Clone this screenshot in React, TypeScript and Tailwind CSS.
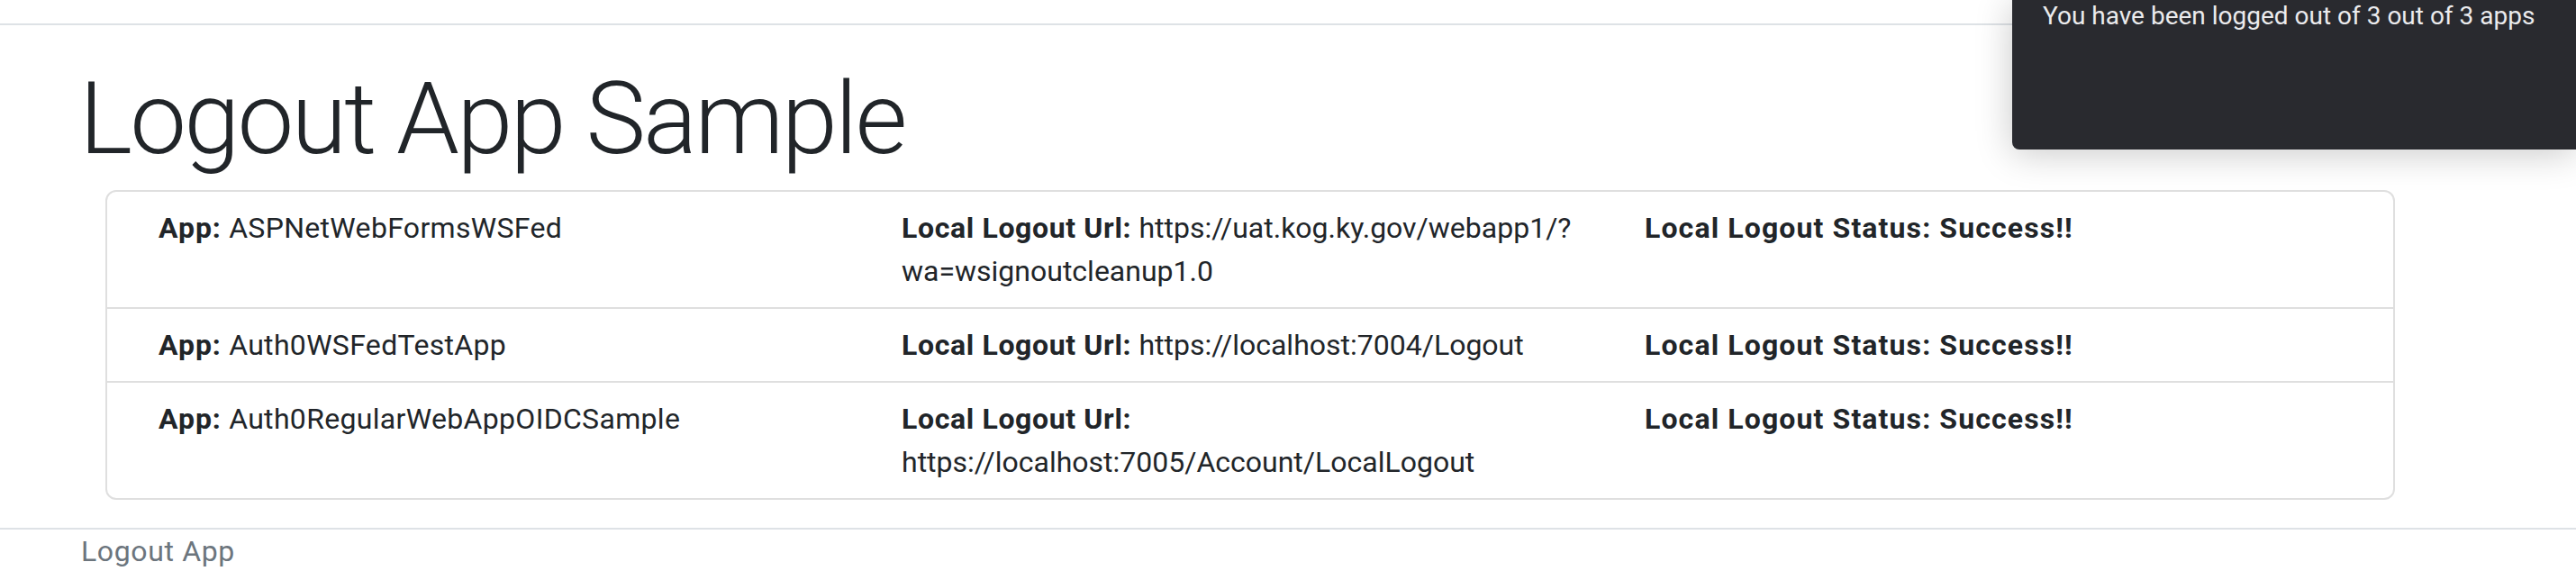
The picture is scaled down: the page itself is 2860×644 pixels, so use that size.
import { Fragment } from "react";

const apps = [
  { name: "ASPNetWebFormsWSFed", url: ["https://uat.kog.ky.gov/webapp1/?", "wa=wsignoutcleanup1.0"] },
  { name: "Auth0WSFedTestApp", url: ["https://localhost:7004/Logout"] },
  { name: "Auth0RegularWebAppOIDCSample", url: ["https://localhost:7005/Account/LocalLogout"] },
];

export default function App() {
  return (
    <div className="relative min-h-screen bg-white font-['Roboto',sans-serif] text-[#212529]">
      {/* Top bar */}
      <div className="h-[28px] border-b-2 border-[#dee2e6]" />

      <main className="pl-[88px]">
        <h1 className="mt-[37px] mb-[12px] text-[112px] font-light leading-[134px] tracking-[-0.025em]">
          Logout App Sample
        </h1>

        <div className="ml-[29px] w-[2542px] overflow-hidden rounded-[12px] border-2 border-[#dfdfdf]">
          {apps.map((app, i) => (
            <div
              key={app.name}
              className={`grid grid-cols-[825px_825px_825px] pl-[57px] py-4 text-[32px] leading-[48px] tracking-[0.01em] ${
                i > 0 ? "border-t-2 border-[#dfdfdf]" : ""
              }`}
            >
              <div>
                <span className="font-bold tracking-[0.03em]">App:</span> {app.name}
              </div>
              <div className="pr-4">
                <span className="font-bold tracking-[0.02em]">Local Logout Url:</span>{" "}
                {app.url.map((part, j) => (
                  <Fragment key={j}>
                    {j > 0 && <wbr />}
                    <span className="whitespace-nowrap tracking-normal">{part}</span>
                  </Fragment>
                ))}
              </div>
              <div className="font-bold tracking-[0.035em]">Local Logout Status: Success!!</div>
            </div>
          ))}
        </div>
      </main>

      <footer className="mt-[31px] border-t-2 border-[#dee2e6] pl-[90px] text-[32px] leading-[48px] tracking-[0.02em] text-[#6c757d]">
        Logout App
      </footer>

      {/* Toast */}
      <div className="absolute top-0 right-0 h-[166px] w-[626px] rounded-bl-[8px] bg-[#292a2f] pl-[34px] shadow-[0_4px_40px_rgba(0,0,0,0.22)]">
        <p className="text-[28px] leading-[36px] text-[#ebebed]">You have been logged out of 3 out of 3 apps</p>
      </div>
    </div>
  );
}
